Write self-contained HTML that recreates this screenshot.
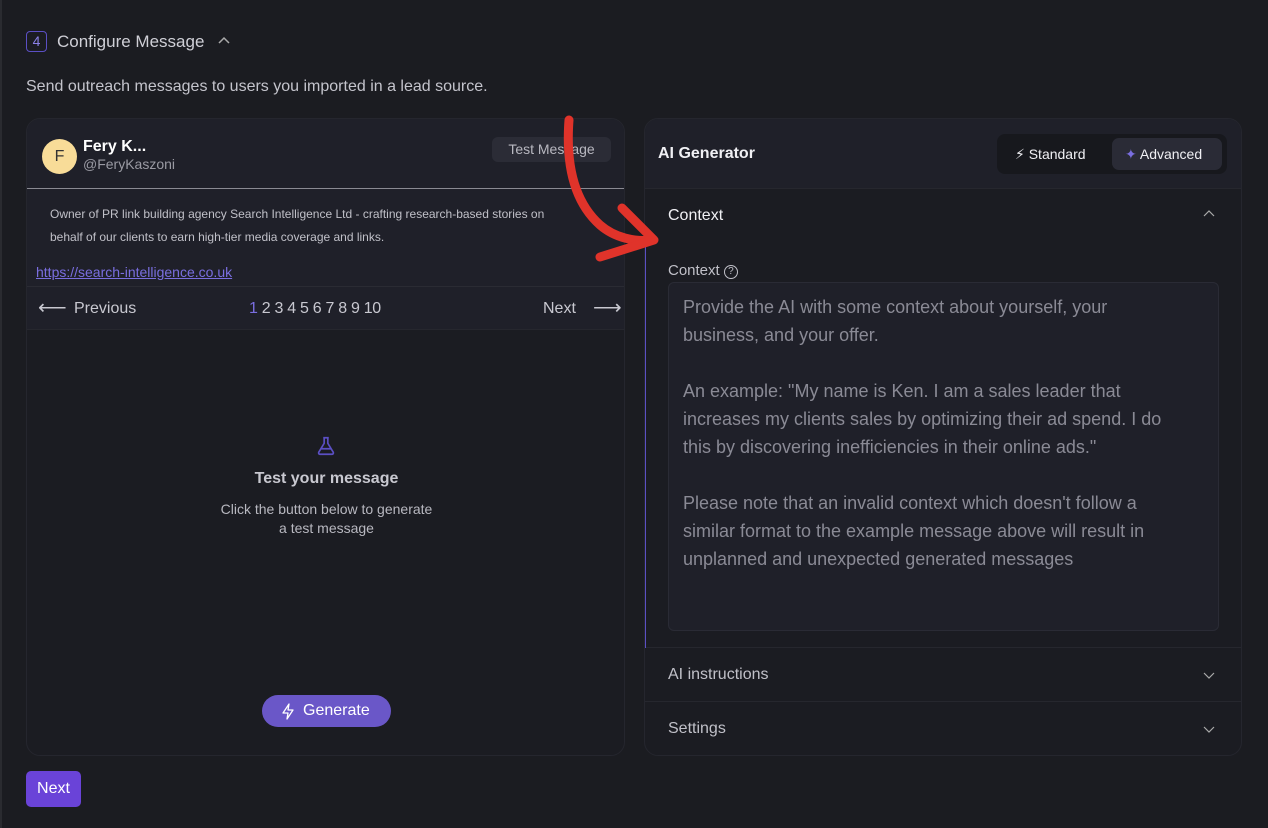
<!DOCTYPE html>
<html><head><meta charset="utf-8"><style>
*{box-sizing:border-box;margin:0;padding:0}
body{width:1268px;height:828px;background:#1b1c21;font-family:"Liberation Sans",sans-serif;position:relative;overflow:hidden;color:#e6e6ea}
.abs{position:absolute}
</style></head><body>
<div class="abs" style="left:0;top:0;width:2px;height:828px;background:#2a2b30"></div>
<div class="abs" style="left:26px;top:31px;width:21px;height:21px;border:1.5px solid #5b4fc4;border-radius:4px;color:#8a80e6;font-size:14px;text-align:center;line-height:18px">4</div>
<div class="abs" style="left:57px;top:31px;font-size:17px;color:#cfcfd6;line-height:21px">Configure Message</div>
<svg class="abs" style="left:217px;top:36px" width="14" height="10"><path d="M2 7L7 2L12 7" stroke="#aaa" stroke-width="1.5" fill="none"/></svg>
<div class="abs" style="left:26px;top:78px;font-size:16px;color:#c4c4cc">Send outreach messages to users you imported in a lead source.</div>

<!-- left card -->
<div class="abs" style="left:26px;top:118px;width:599px;height:638px;border:1px solid #25262e;border-radius:14px;background:#1b1c22;overflow:hidden">
  <div style="height:70px;background:#1f2029;border-bottom:1.5px solid #8a8a92;position:relative">
    <div class="abs" style="left:15px;top:20px;width:35px;height:35px;border-radius:50%;background:#f8dc98;color:#333;font-size:16px;text-align:center;line-height:35px">F</div>
    <div class="abs" style="left:56px;top:19px;font-size:16px;font-weight:bold;color:#fff">Fery K...</div>
    <div class="abs" style="left:56px;top:37px;font-size:14px;color:#9a9aa3">@FeryKaszoni</div>
    <div class="abs" style="left:465px;top:18px;width:119px;height:25px;background:#2b2c36;border-radius:6px;font-size:14px;color:#b8b8c0;text-align:center;line-height:25px">Test Message</div>
  </div>
  <div style="height:98px;background:#1f2029;position:relative;border-bottom:1px solid #2a2b33">
    <div class="abs" style="left:23px;top:14px;font-size:12px;line-height:23px;color:#c0c0c8;width:525px">Owner of PR link building agency Search Intelligence Ltd - crafting research-based stories on behalf of our clients to earn high-tier media coverage and links.</div>
    <div class="abs" style="left:9px;top:75px;font-size:14px;color:#7a6ee0;text-decoration:underline">https://search-intelligence.co.uk</div>
  </div>
  <div style="height:43px;background:#1f2029;position:relative;border-bottom:1px solid #26272e">
    <div class="abs" style="left:11px;top:11px;font-size:20px;color:#c8c8d0;line-height:20px">⟵</div>
    <div class="abs" style="left:47px;top:13px;font-size:16px;color:#c8c8d0">Previous</div>
    <div class="abs" style="left:222px;top:13px;font-size:16px;color:#c8c8d0;letter-spacing:-0.3px"><span style="color:#7a6ee0">1</span> 2 3 4 5 6 7 8 9 10</div>
    <div class="abs" style="left:516px;top:13px;font-size:16px;color:#c8c8d0">Next</div>
    <div class="abs" style="left:566px;top:11px;font-size:20px;color:#c8c8d0;line-height:20px">⟶</div>
  </div>
  <svg class="abs" style="left:288px;top:316px" width="22" height="22" viewBox="0 0 24 24"><path d="M9 3h6M10 3v6L4 19a1.5 1.5 0 0 0 1.3 2h13.4a1.5 1.5 0 0 0 1.3-2L14 9V3M6 15h12" stroke="#5b4fc4" stroke-width="1.8" fill="none"/></svg>
  <div class="abs" style="left:0;width:599px;top:351px;text-align:center;font-size:16px;font-weight:bold;color:#c8c8d0">Test your message</div>
  <div class="abs" style="left:0;width:599px;top:381px;text-align:center;font-size:14px;line-height:19px;color:#b8b8c0">Click the button below to generate<br>a test message</div>
  <div class="abs" style="left:235px;top:576px;width:129px;height:32px;background:#6a57c8;border-radius:16px;color:#fff;font-size:16px;line-height:32px;padding-left:41px">Generate</div>
  <svg class="abs" style="left:253px;top:584px" width="16" height="17" viewBox="0 0 16 17"><path d="M9 1L3 10h5l-1 6 6-9H8z" stroke="#fff" stroke-width="1.3" fill="none" stroke-linejoin="round"/></svg>
</div>

<!-- right card -->
<div class="abs" style="left:644px;top:118px;width:598px;height:638px;border:1px solid #25262e;border-radius:14px;background:#1b1c22;overflow:hidden">
  <div style="height:70px;background:#1f2029;border-bottom:1px solid #26272e;position:relative">
    <div class="abs" style="left:13px;top:26px;font-size:16px;font-weight:bold;color:#f0f0f4">AI Generator</div>
    <div class="abs" style="left:352px;top:15px;width:230px;height:40px;background:#17181d;border-radius:8px"></div>
    <div class="abs" style="left:467px;top:19px;width:110px;height:32px;background:#2a2b36;border-radius:7px"></div>
    <div class="abs" style="left:370px;top:27px;font-size:14px;color:#f0f0f4">⚡︎ Standard</div>
    <div class="abs" style="left:480px;top:27px;font-size:14px;color:#f0f0f4"><span style="color:#7a6ee0">✦</span> Advanced</div>
  </div>
  <div style="height:459px;position:relative;border-bottom:1px solid #26272e">
    <div class="abs" style="left:0;top:52px;width:1px;height:407px;background:#5b4fc4"></div>
    <div class="abs" style="left:23px;top:18px;font-size:16px;color:#f0f0f4">Context</div>
    <svg class="abs" style="left:558px;top:21px" width="12" height="8"><path d="M1 6L6 1L11 6" stroke="#aaa" stroke-width="1.2" fill="none"/></svg>
    <div class="abs" style="left:23px;top:73px;font-size:15px;color:#c0c0c8">Context <span style="display:inline-block;width:14px;height:14px;border:1.3px solid #c0c0c8;border-radius:50%;font-size:10px;text-align:center;line-height:12px;vertical-align:1px">?</span></div>
    <div class="abs" style="left:23px;top:93px;width:551px;height:349px;background:#1f2029;border:1px solid #2a2b35;border-radius:6px;padding:10px 30px 10px 14px;font-size:18px;line-height:28px;color:#8a8a95">Provide the AI with some context about yourself, your business, and your offer.<br><br>An example: "My name is Ken. I am a sales leader that increases my clients sales by optimizing their ad spend. I do this by discovering inefficiencies in their online ads."<br><br>Please note that an invalid context which doesn't follow a similar format to the example message above will result in unplanned and unexpected generated messages</div>
  </div>
  <div style="height:54px;position:relative;border-bottom:1px solid #26272e">
    <div class="abs" style="left:23px;top:18px;font-size:16px;color:#c0c0c8">AI instructions</div>
    <svg class="abs" style="left:558px;top:24px" width="12" height="8"><path d="M1 1L6 6L11 1" stroke="#aaa" stroke-width="1.2" fill="none"/></svg>
  </div>
  <div style="height:54px;position:relative">
    <div class="abs" style="left:23px;top:18px;font-size:16px;color:#c0c0c8">Settings</div>
    <svg class="abs" style="left:558px;top:24px" width="12" height="8"><path d="M1 1L6 6L11 1" stroke="#aaa" stroke-width="1.2" fill="none"/></svg>
  </div>
</div>

<div class="abs" style="left:26px;top:771px;width:55px;height:36px;background:#6a43d8;border-radius:5px;color:#fff;font-size:16px;text-align:center;line-height:36px">Next</div>

<svg class="abs" style="left:0;top:0" width="1268" height="828">
<path d="M569 120C566 160 572 200 600 225C615 238 635 242 652 240" stroke="#e0332a" stroke-width="9" fill="none" stroke-linecap="round"/>
<path d="M622 208L654 240L600 257" stroke="#e0332a" stroke-width="9" fill="none" stroke-linecap="round" stroke-linejoin="round"/>
</svg>
</body></html>
